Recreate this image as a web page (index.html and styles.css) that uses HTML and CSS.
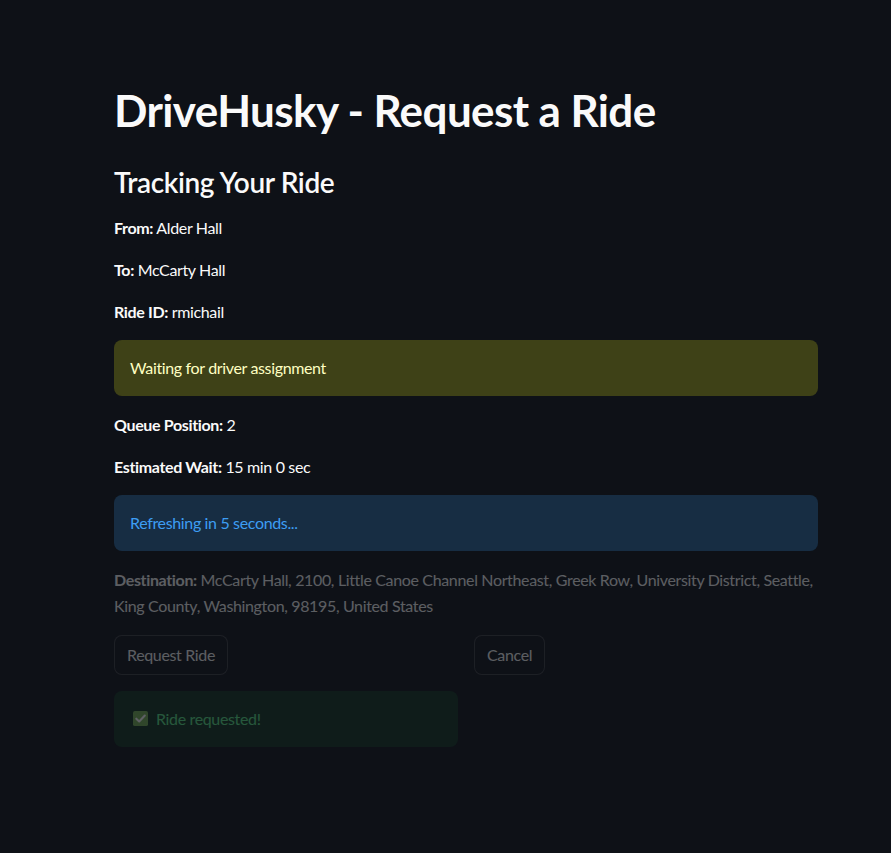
FILE: index.html
```html
<!DOCTYPE html>
<html>
<head>
<meta charset="utf-8">
<link rel="stylesheet" href="styles.css">
</head>
<body>
<main class="page">
  <h1 class="title">DriveHusky - Request a Ride</h1>
  <h3 class="subheader">Tracking Your Ride</h3>
  <p class="text"><strong>From:</strong> Alder Hall</p>
  <p class="text"><strong>To:</strong> McCarty Hall</p>
  <p class="text"><strong>Ride ID:</strong> rmichail</p>
  <div class="alert alert-warning">Waiting for driver assignment</div>
  <p class="text"><strong>Queue Position:</strong> 2</p>
  <p class="text"><strong>Estimated Wait:</strong> 15 min 0 sec</p>
  <div class="alert alert-info">Refreshing in 5 seconds...</div>
  <div class="stale stack">
    <p class="text"><strong>Destination:</strong> McCarty Hall, 2100, Little Canoe Channel Northeast, Greek Row, University District, Seattle, King County, Washington, 98195, United States</p>
    <div class="columns">
      <div class="column">
        <div><button class="btn">Request Ride</button></div>
        <div class="alert alert-success">
          <svg class="check" viewBox="0 0 16 16" width="15" height="15"><rect x="0" y="0" width="16" height="16" rx="2" fill="#77b255"/><path d="M3.5 8.2 L6.6 11.2 L12.6 4.8" fill="none" stroke="#ffffff" stroke-width="2.2" stroke-linecap="round" stroke-linejoin="round"/></svg>
          <span>Ride requested!</span>
        </div>
      </div>
      <div class="column">
        <div><button class="btn">Cancel</button></div>
      </div>
    </div>
  </div>
</main>
</body>
</html>
```
FILE: styles.css
```css
html, body {
  margin: 0;
  padding: 0;
  background: #0e1117;
}
body {
  color: #fafafa;
  font-family: Lato, "Liberation Sans", sans-serif;
  font-size: 16px;
  letter-spacing: -0.35px;
  min-height: 853px;
}
.page {
  width: 704px;
  padding: 84px 0 0 114px;
  display: flex;
  flex-direction: column;
  gap: 16px;
}
.title {
  margin: 0 0 13px 0;
  font-size: 44px;
  line-height: 1.2;
  font-weight: 700;
  letter-spacing: -0.6px;
}
.subheader {
  margin: 0;
  font-size: 28px;
  line-height: 1.2;
  font-weight: 600;
  letter-spacing: -0.4px;
}
.text {
  margin: 0;
  line-height: 1.6;
}
.text strong {
  font-weight: 700;
}
.alert {
  border-radius: 8px;
  padding: 16px;
  line-height: 1.5;
}
.alert-warning {
  background: #3e4117;
  color: #ffffc2;
}
.alert-info {
  background: #172d43;
  color: #3d9df3;
}
.alert-success {
  background: #123523;
  color: #5ce488;
  display: flex;
  align-items: center;
  gap: 8px;
  padding-left: 19px;
}
.check {
  flex: none;
}
.stale {
  opacity: 0.33;
}
.stack {
  display: flex;
  flex-direction: column;
  gap: 16px;
}
.columns {
  display: grid;
  grid-template-columns: 1fr 1fr;
  gap: 16px;
}
.column {
  display: flex;
  flex-direction: column;
  gap: 16px;
}
.btn {
  font-family: inherit;
  font-size: 16px;
  letter-spacing: inherit;
  color: #fafafa;
  background: #0e1117;
  border: 1px solid rgba(250, 250, 250, 0.2);
  border-radius: 8px;
  padding: 4px 12px;
  min-height: 40px;
  line-height: 1.6;
}
```
